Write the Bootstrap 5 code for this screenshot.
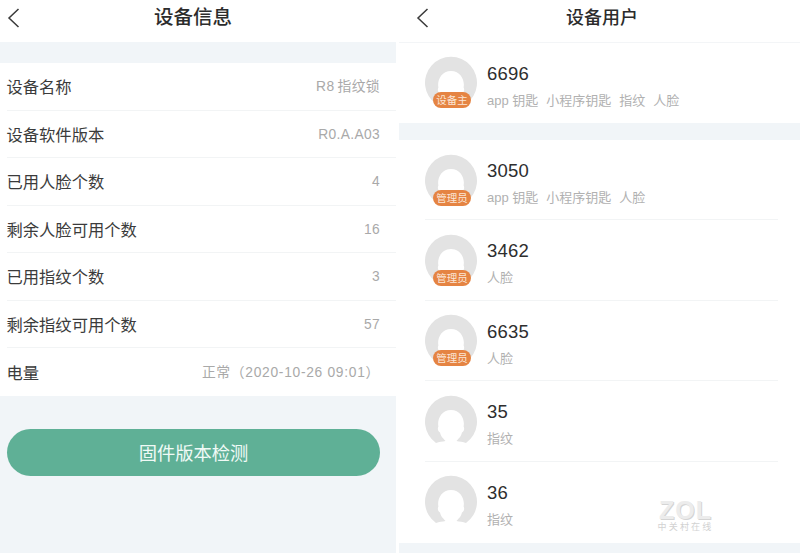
<!DOCTYPE html>
<html lang="zh-CN">
<head>
<meta charset="utf-8">
<title>设备信息</title>
<link href="https://cdn.jsdelivr.net/npm/bootstrap@5.3.0/dist/css/bootstrap.min.css" rel="stylesheet">
<style>
html,body{width:800px;height:553px;overflow:hidden;background:#fff;margin:0}
body{font-family:"Liberation Sans","Noto Sans CJK SC",sans-serif;color:#333}
.shot{width:800px;height:553px}
.pane-l{width:396px;height:553px;background:#f1f5f8;flex:none}
.pane-r{width:401px;height:553px;margin-left:3px;background:#fff;flex:none}
.topbar{height:42px;background:#fff;position:relative;font-size:19.5px;font-weight:500;color:#2c2c2c;padding-bottom:6px;padding-right:10px}
.topbar svg{position:absolute;top:8px}
.pane-l .topbar svg{left:7px}
.pane-r .topbar svg{left:17px}
.topbar-r{border-bottom:1px solid #f3f5f7;height:43px;padding-right:0;padding-left:5px;font-size:18px}
.gap-l{height:21px}
.info-list{background:#fff;padding-left:6.500px}
.info-row{height:47.55px;border-bottom:1px solid #f2f4f5;padding-right:16px;padding-top:2.500px;font-size:16.300px;color:#3b3b3b}
.info-row:last-child{border-bottom:0}
.info-row span:last-child{font-size:13.800px;color:#a9a9a9;letter-spacing:.35px}
.info-row .wide-val{letter-spacing:.7px!important}
.check-btn{margin:33px 16px 0 7px;width:373px;height:47px;background:#5fb096;color:#f0faf6;border:0;border-radius:24px;font-size:18.300px;display:block;padding:3px 0 0}
.check-btn:hover,.check-btn:active{background:#5fb096!important;color:#f0faf6!important}
.band{height:17px;background:#f1f5f8}
.band-end{height:11px;background:#f1f5f8}
.user-row{height:80.4px;margin:0 22px 0 26px;border-bottom:1px solid #f2f4f5;padding-top:13.500px}
.user-row.first{height:80px;border-bottom:0;padding-top:13px}
.user-row.bare{border-bottom:0;height:81px}
.ava{width:52px;height:52px;position:relative;flex:none}
.ava svg{display:block}
.role-tag{position:absolute;left:8px;bottom:0;width:38px;height:16px;border-radius:8px;background:#e58443;color:#fbe6d6;font-size:10.500px;line-height:16px;text-align:center}
.user-txt{margin-left:10px}
.user-id{font-size:18.500px;line-height:20px;color:#2e2e2e;letter-spacing:.2px;margin-top:7.500px}
.user-keys{font-size:13px;line-height:16px;color:#b1b1b1;margin-top:9px;gap:8px}
.wm{position:absolute;left:657px;top:501px;width:57px;text-align:center;pointer-events:none}
.wm-a{font-size:25px;line-height:19px;font-weight:700;letter-spacing:1px;color:#ececec;text-shadow:1px 1px 0 #d4d4d4}
.wm-b{font-size:9px;line-height:10px;margin-top:2px;letter-spacing:2.200px;white-space:nowrap;color:#d2d2d2}
</style>
</head>
<body>
<svg width="0" height="0" class="position-absolute">
<defs>
<symbol id="face" viewBox="0 0 52 52">
<path fill="#e3e3e3" d="M11 48A26 26 0 1 1 41 48C38 47 34.500 46.500 31.500 46C33 44 36 42 37 37.500C39.500 36 39.500 33 38.600 31.500C40 25 36 15 26 15C16 15 12 25 13.400 31.500C12.500 33 12.500 36 15 37.500C16 42 19 44 20.500 46C17.500 46.500 14 47 11 48Z"/>
</symbol>
<symbol id="back" viewBox="0 0 14 20">
<path fill="none" stroke="#3a3a3a" stroke-width="1.500" d="M11.500 1L2 10l9.500 9"/>
</symbol>
</defs>
</svg>
<div class="shot d-flex position-relative">
<div class="pane-l">
<div class="topbar d-flex align-items-center justify-content-center">
<svg width="14" height="20"><use href="#back"/></svg>设备信息</div>
<div class="gap-l"></div>
<div class="info-list">
<div class="info-row d-flex justify-content-between align-items-center"><span>设备名称</span><span>R8&#8201;指纹锁</span></div>
<div class="info-row d-flex justify-content-between align-items-center"><span>设备软件版本</span><span>R0.A.A03</span></div>
<div class="info-row d-flex justify-content-between align-items-center"><span>已用人脸个数</span><span>4</span></div>
<div class="info-row d-flex justify-content-between align-items-center"><span>剩余人脸可用个数</span><span>16</span></div>
<div class="info-row d-flex justify-content-between align-items-center"><span>已用指纹个数</span><span>3</span></div>
<div class="info-row d-flex justify-content-between align-items-center"><span>剩余指纹可用个数</span><span>57</span></div>
<div class="info-row d-flex justify-content-between align-items-center"><span>电量</span><span class="wide-val">正常（2020-10-26 09:01）</span></div>
</div>
<button type="button" class="btn check-btn">固件版本检测</button>
</div>
<div class="pane-r">
<div class="topbar topbar-r d-flex align-items-center justify-content-center">
<svg width="14" height="20"><use href="#back"/></svg>设备用户</div>
<div class="user-row first d-flex">
<div class="ava"><svg width="52" height="52"><use href="#face"/></svg><div class="role-tag">设备主</div></div>
<div class="user-txt"><div class="user-id">6696</div><div class="user-keys d-flex"><span>app 钥匙</span><span>小程序钥匙</span><span>指纹</span><span>人脸</span></div></div>
</div>
<div class="band"></div>
<div class="user-row d-flex">
<div class="ava"><svg width="52" height="52"><use href="#face"/></svg><div class="role-tag">管理员</div></div>
<div class="user-txt"><div class="user-id">3050</div><div class="user-keys d-flex"><span>app 钥匙</span><span>小程序钥匙</span><span>人脸</span></div></div>
</div>
<div class="user-row d-flex">
<div class="ava"><svg width="52" height="52"><use href="#face"/></svg><div class="role-tag">管理员</div></div>
<div class="user-txt"><div class="user-id">3462</div><div class="user-keys d-flex"><span>人脸</span></div></div>
</div>
<div class="user-row d-flex">
<div class="ava"><svg width="52" height="52"><use href="#face"/></svg><div class="role-tag">管理员</div></div>
<div class="user-txt"><div class="user-id">6635</div><div class="user-keys d-flex"><span>人脸</span></div></div>
</div>
<div class="user-row d-flex">
<div class="ava"><svg width="52" height="52"><use href="#face"/></svg></div>
<div class="user-txt"><div class="user-id">35</div><div class="user-keys d-flex"><span>指纹</span></div></div>
</div>
<div class="user-row bare d-flex">
<div class="ava"><svg width="52" height="52"><use href="#face"/></svg></div>
<div class="user-txt"><div class="user-id">36</div><div class="user-keys d-flex"><span>指纹</span></div></div>
</div>
<div class="band-end"></div>
</div>
<div class="wm"><div class="wm-a">ZOL</div><div class="wm-b">中关村在线</div></div>
</div>
</body>
</html>
